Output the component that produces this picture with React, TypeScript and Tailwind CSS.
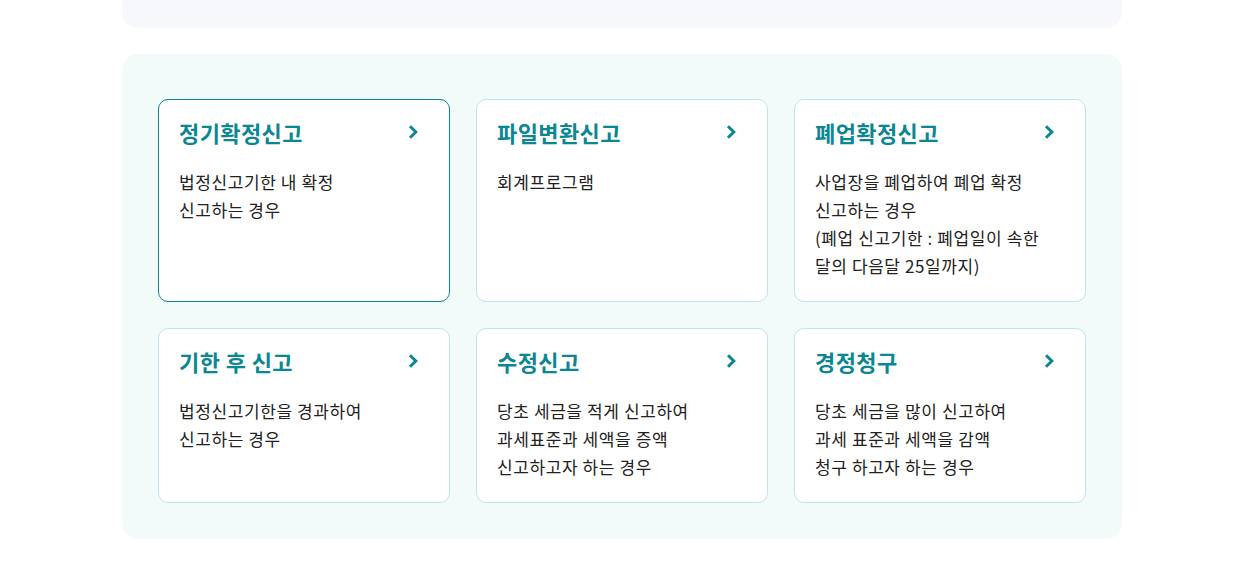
const cards = [
  { title: "정기확정신고", desc: ["법정신고기한 내 확정", "신고하는 경우"], active: true },
  { title: "파일변환신고", desc: ["회계프로그램"] },
  {
    title: "폐업확정신고",
    desc: ["사업장을 폐업하여 폐업 확정", "신고하는 경우", "(폐업 신고기한 : 폐업일이 속한", "달의 다음달 25일까지)"],
  },
  { title: "기한 후 신고", desc: ["법정신고기한을 경과하여", "신고하는 경우"] },
  { title: "수정신고", desc: ["당초 세금을 적게 신고하여", "과세표준과 세액을 증액", "신고하고자 하는 경우"] },
  { title: "경정청구", desc: ["당초 세금을 많이 신고하여", "과세 표준과 세액을 감액", "청구 하고자 하는 경우"] },
];

function Chevron() {
  return (
    <svg width="12" height="16" viewBox="0 0 12 16" className="mt-[6px] shrink-0">
      <path d="M3 2.3 L8.8 8 L3 13.7" fill="none" stroke="#0b8793" strokeWidth="3" />
    </svg>
  );
}

export default function App() {
  return (
    <div
      className="w-[1236px] h-[566px] bg-white overflow-hidden"
      style={{ fontFamily: '"Noto Sans CJK KR", "Noto Sans", sans-serif' }}
    >
      <div className="mx-[122px] w-[1000px]">
        <div className="h-[28px] bg-[#f7f8fc] rounded-b-[16px]" />

        <div className="mt-[26px] bg-[#f2fafa] rounded-[16px] pt-[45px] pb-[36px] px-[36px]">
          <div className="grid grid-cols-3 gap-x-[26px] gap-y-[26px]">
            {cards.map((c, i) => (
              <div
                key={i}
                className={`bg-white rounded-[10px] border pl-[20px] pr-[30px] pt-[18px] pb-[21px] ${
                  c.active ? "border-[#0b8793]" : "border-[#bfe4ea]"
                }`}
              >
                <div className="flex items-start justify-between">
                  <h3 className="text-[22px] leading-[28px] font-bold text-[#0b8793] tracking-[0.4px]">{c.title}</h3>
                  <Chevron />
                </div>
                <div className="mt-[22px] text-[17px] leading-[28px] text-[#222] tracking-[0.6px]">
                  {c.desc.map((d, j) => (
                    <p key={j}>{d}</p>
                  ))}
                </div>
              </div>
            ))}
          </div>
        </div>
      </div>
    </div>
  );
}
